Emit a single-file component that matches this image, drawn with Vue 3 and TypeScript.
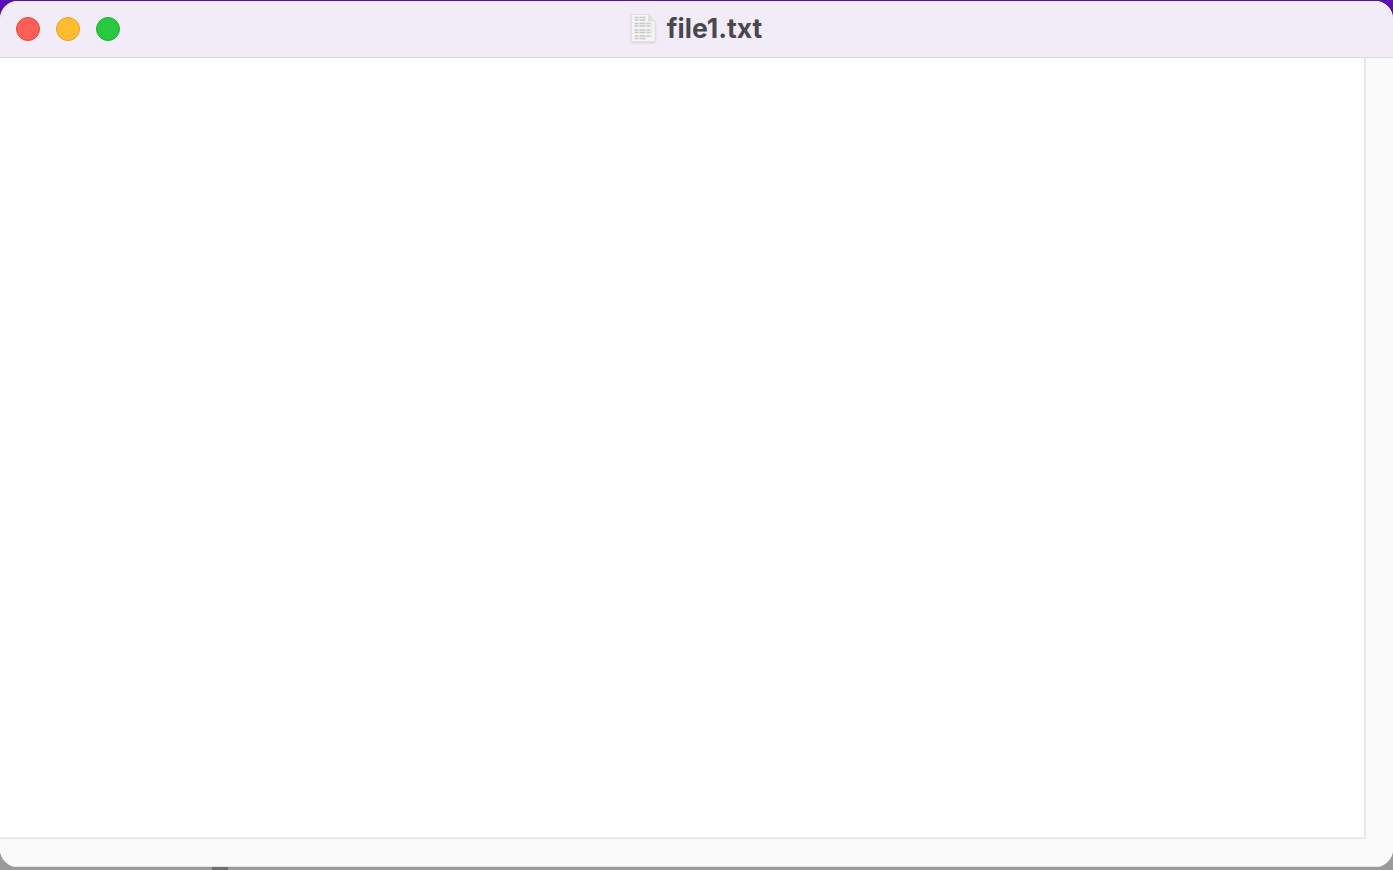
<template>
  <div class="desktop">
    <div class="window">
      <header class="titlebar">
        <div class="lights">
          <span class="light red"></span>
          <span class="light yellow"></span>
          <span class="light green"></span>
        </div>
        <div class="title">
          <svg class="file-icon" width="28" height="30" viewBox="0 0 28 30" aria-hidden="true">
            <path d="M2.5 1.5H19L26 8.5V28.5H2.5Z" fill="#f5f4f4" stroke="#e2e0e2" stroke-width="1" />
            <path d="M19 1.5V8.5H26Z" fill="#dedcde" />
            <g stroke="#c9c8c9" stroke-width="1.5" stroke-dasharray="4 1 6 1">
              <path d="M5.5 4.5H17" />
              <path d="M5.5 7H17" />
              <path d="M5.5 10.5H23" />
              <path d="M5.5 13H23" />
              <path d="M5.5 17H23" />
              <path d="M5.5 19.5H23" />
              <path d="M5.5 23H23" />
              <path d="M5.5 25.5H17" />
            </g>
          </svg>
          <span class="name">file1.txt</span>
        </div>
      </header>
      <div class="middle">
        <main class="content"></main>
        <aside class="gutter-right"></aside>
      </div>
      <footer class="gutter-bottom"></footer>
    </div>
    <div class="strip">
      <span class="segment"></span>
    </div>
  </div>
</template>

<script setup lang="ts">
</script>

<style>
html, body { margin: 0; padding: 0; overflow: hidden; }
</style>

<style scoped>
.desktop {
  width: 1393px;
  height: 870px;
  display: flex;
  flex-direction: column;
  overflow: hidden;
  background: linear-gradient(#5a0eb4 0 50%, #9a9a9a 50%);
  font-family: Inter, "Liberation Sans", sans-serif;
}
.window {
  margin-top: 1px;
  height: 866px;
  flex: none;
  display: flex;
  flex-direction: column;
  border-radius: 18px;
  overflow: hidden;
  background: #fafafa;
}
.titlebar {
  height: 56px;
  flex: none;
  display: flex;
  align-items: center;
  justify-content: center;
  position: relative;
  background: #f2ecf9;
  border-bottom: 1px solid #d9d6de;
}
.lights {
  position: absolute;
  left: 16px;
  top: 16px;
  display: flex;
  gap: 16px;
}
.light {
  width: 24px;
  height: 24px;
  border-radius: 50%;
  box-sizing: border-box;
  border: 1px solid transparent;
}
.red { background: #ff5f57; border-color: #e2463f; }
.yellow { background: #febc2e; border-color: #e1a325; }
.green { background: #28c840; border-color: #1fae32; }
.title {
  display: flex;
  align-items: center;
  gap: 10px;
  margin-top: -2px;
  margin-left: -2px;
}
.file-icon {
  display: block;
  filter: drop-shadow(0 1px 1px rgba(0, 0, 0, .12));
}
.name {
  font-size: 26.5px;
  font-weight: 700;
  line-height: 30px;
  color: #4a484e;
}
.middle {
  flex: 1;
  display: flex;
  min-height: 0;
}
.content {
  flex: 1;
  background: #fff;
  border-right: 2px solid #e8e8ea;
  border-bottom: 2px solid #e8e8ea;
}
.gutter-right {
  width: 27px;
  flex: none;
  background: #fafafa;
}
.gutter-bottom {
  height: 28px;
  flex: none;
  background: #fafafa;
  box-shadow: inset 0 -1px 0 #e2e2e2;
}
.strip {
  flex: 1;
  display: flex;
}
.segment {
  width: 16px;
  margin-left: 212px;
  background: #6f6f6f;
}
</style>
